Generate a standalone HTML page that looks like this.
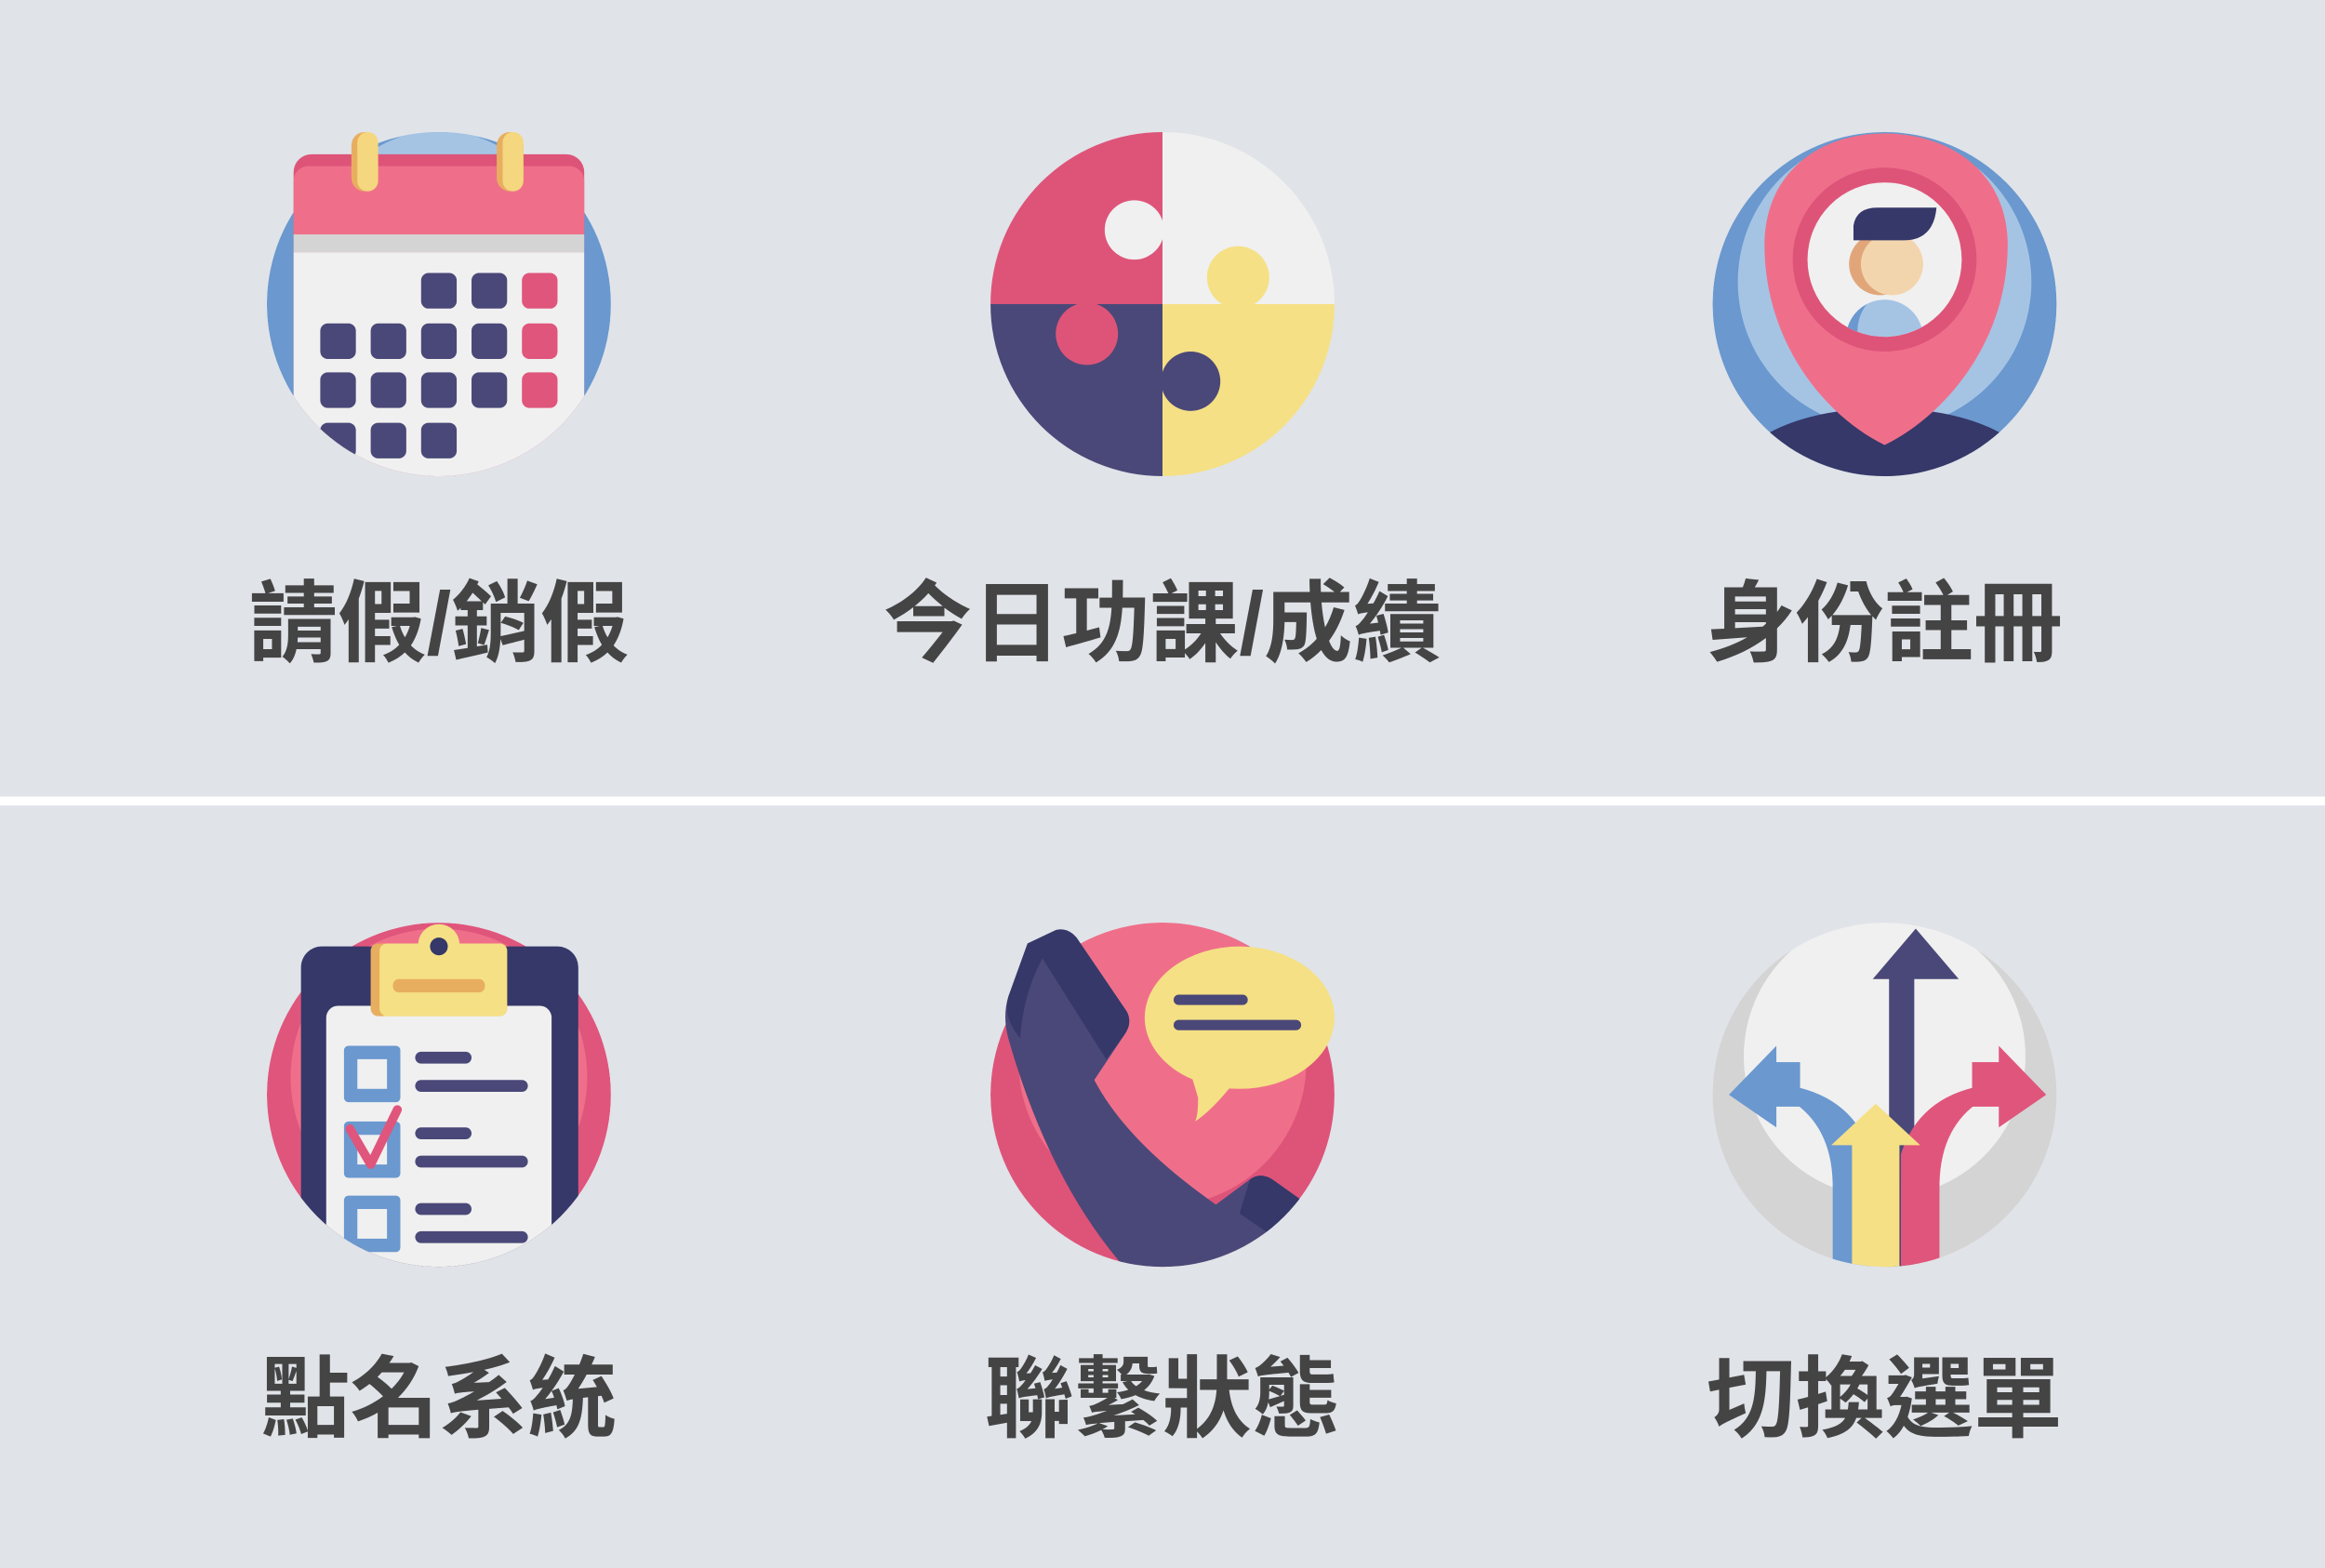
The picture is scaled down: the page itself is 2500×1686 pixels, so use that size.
<!DOCTYPE html>
<html><head><meta charset="utf-8"><style>
html,body{margin:0;padding:0;background:#e0e3e8;}
svg{display:block}
</style></head><body>
<svg width="2500" height="1686" viewBox="0 0 1568 1057" preserveAspectRatio="none" xmlns="http://www.w3.org/2000/svg">
<defs>
<clipPath id="c1"><circle cx="296" cy="205" r="116"/><rect x="190" y="95" width="212" height="90"/></clipPath>
<clipPath id="c1b"><circle cx="296" cy="205" r="116"/></clipPath>
<clipPath id="c2"><circle cx="784" cy="205" r="116"/></clipPath>
<clipPath id="c3"><circle cx="1271" cy="205" r="116"/></clipPath>
<clipPath id="c4"><circle cx="296" cy="738" r="116"/><rect x="195" y="625" width="202" height="110"/></clipPath>
<clipPath id="c4b"><circle cx="296" cy="738" r="116"/></clipPath>
<clipPath id="c5"><circle cx="784" cy="738" r="116"/><rect x="670" y="615" width="95" height="90"/></clipPath>
<clipPath id="c5b"><circle cx="784" cy="738" r="116"/></clipPath>
<clipPath id="c6"><circle cx="1271" cy="738" r="116"/></clipPath>
</defs>
<rect width="1568" height="1057" fill="#e0e3e8"/>
<rect x="0" y="537" width="1568" height="6" fill="#ffffff"/>

<!-- Calendar -->
<g clip-path="url(#c1b)">
<circle cx="296" cy="205" r="116" fill="#6a98cf"/>
<circle cx="296" cy="170" r="82" fill="#a5c4e4"/>
</g>
<g clip-path="url(#c1)">
<rect x="198" y="104" width="196" height="240" rx="12" fill="#de5479"/>
<rect x="198" y="112" width="196" height="48" rx="10" fill="#ef6f8a"/>
<rect x="198" y="150" width="196" height="10" fill="#ef6f8a"/>
<rect x="198" y="158" width="196" height="12" fill="#d4d4d4"/>
<rect x="198" y="170" width="196" height="180" fill="#f0f0f0"/>
<g fill="#4a4878">
<rect x="284" y="184" width="24" height="24" rx="5"/><rect x="318" y="184" width="24" height="24" rx="5"/>
<rect x="216" y="218" width="24" height="24" rx="5"/><rect x="250" y="218" width="24" height="24" rx="5"/><rect x="284" y="218" width="24" height="24" rx="5"/><rect x="318" y="218" width="24" height="24" rx="5"/>
<rect x="216" y="251" width="24" height="24" rx="5"/><rect x="250" y="251" width="24" height="24" rx="5"/><rect x="284" y="251" width="24" height="24" rx="5"/><rect x="318" y="251" width="24" height="24" rx="5"/>
<rect x="216" y="285" width="24" height="24" rx="5"/><rect x="250" y="285" width="24" height="24" rx="5"/><rect x="284" y="285" width="24" height="24" rx="5"/>
</g>
<g fill="#e0557c">
<rect x="352" y="184" width="24" height="24" rx="5"/><rect x="352" y="218" width="24" height="24" rx="5"/><rect x="352" y="251" width="24" height="24" rx="5"/>
</g>
</g>
<g>
<rect x="237" y="89" width="18" height="40" rx="9" fill="#e8ae60"/>
<rect x="241" y="89" width="14" height="40" rx="7" fill="#f5d77f"/>
<rect x="335" y="89" width="18" height="40" rx="9" fill="#e8ae60"/>
<rect x="339" y="89" width="14" height="40" rx="7" fill="#f5d77f"/>
</g>

<!-- Puzzle -->
<g clip-path="url(#c2)">
<rect x="668" y="89" width="116" height="116" fill="#de5479"/>
<rect x="784" y="89" width="116" height="116" fill="#f0f0f0"/>
<rect x="668" y="205" width="116" height="116" fill="#4a4878"/>
<rect x="784" y="205" width="116" height="116" fill="#f5e085"/>
<circle cx="765" cy="155" r="20" fill="#f0f0f0"/>
<circle cx="835" cy="187" r="21" fill="#f5e085"/>
<circle cx="733" cy="225" r="21" fill="#de5479"/>
<circle cx="803" cy="257" r="20" fill="#4a4878"/>
</g>

<!-- Location -->
<g clip-path="url(#c3)">
<circle cx="1271" cy="205" r="116" fill="#6a98cf"/>
<circle cx="1271" cy="190" r="99" fill="#a5c4e4"/>
<ellipse cx="1271" cy="320" rx="100" ry="45" fill="#353868"/>
</g>
<path d="M1271 300 C1230 280 1190 230 1190 165 C1190 118 1225 90 1271 90 C1317 90 1354 118 1354 165 C1354 230 1312 280 1271 300 Z" fill="#ef6f8a"/>
<circle cx="1271" cy="175" r="62" fill="#de5479"/>
<circle cx="1271" cy="175" r="52" fill="#f0f0f0"/>
<clipPath id="pin"><circle cx="1271" cy="175" r="52"/></clipPath>
<g clip-path="url(#pin)">
<circle cx="1271" cy="228" r="26" fill="#a5c4e4"/>
<path d="M1245 228 a26 26 0 0 1 14 -23 a30 30 0 0 0 -6 23 z" fill="#6a98cf"/>
<circle cx="1268" cy="178" r="21" fill="#e0a67a"/>
<circle cx="1276" cy="178" r="21" fill="#f3d5ad"/>
<path d="M1250 162 L1250 152 Q1252 140 1266 140 L1306 140 Q1304 162 1284 162 Z" fill="#353868"/>
</g>

<!-- Clipboard -->
<g clip-path="url(#c4b)">
<circle cx="296" cy="738" r="116" fill="#e0557c"/>
<circle cx="296" cy="726" r="100" fill="#ef6f8a"/>
</g>
<g clip-path="url(#c4)">
<rect x="203" y="638" width="187" height="260" rx="14" fill="#353868"/>
<rect x="220" y="678" width="152" height="230" rx="8" fill="#f0f0f0"/>
<g fill="#6a98cf">
<rect x="232" y="705" width="38" height="38" rx="3"/>
<rect x="232" y="756" width="38" height="38" rx="3"/>
<rect x="232" y="806" width="38" height="38" rx="3"/>
</g>
<g fill="#f0f0f0">
<rect x="241" y="714" width="20" height="20"/>
<rect x="241" y="765" width="20" height="20"/>
<rect x="241" y="815" width="20" height="20"/>
</g>
<g stroke="#4a4878" stroke-width="8" stroke-linecap="round">
<line x1="284" y1="713" x2="314" y2="713"/><line x1="284" y1="732" x2="352" y2="732"/>
<line x1="284" y1="764" x2="314" y2="764"/><line x1="284" y1="783" x2="352" y2="783"/>
<line x1="284" y1="815" x2="314" y2="815"/><line x1="284" y1="834" x2="352" y2="834"/>
</g>
<path d="M236 761 L250 785 L268 748" fill="none" stroke="#e0557c" stroke-width="6" stroke-linecap="round" stroke-linejoin="round"/>
</g>
<circle cx="296" cy="637" r="14" fill="#f5e085"/>
<rect x="250" y="636" width="92" height="49" rx="5" fill="#e8ae60"/>
<rect x="256" y="636" width="86" height="49" rx="5" fill="#f5e085"/>
<circle cx="296" cy="638" r="6" fill="#353868"/>
<rect x="265" y="660" width="62" height="9" rx="4" fill="#e8ae60"/>

<!-- Phone -->
<g clip-path="url(#c5b)">
<circle cx="784" cy="738" r="116" fill="#de5479"/>
<circle cx="784" cy="716" r="97" fill="#ef6f8a"/>
</g>
<g clip-path="url(#c5)">
<path d="M693 636 L712 627 Q720 625 726 632 L760 682 Q764 690 758 698 L738 728 Q760 770 820 812 L843 795 Q850 790 858 795 L890 818 L860 900 L810 900 Q720 840 680 700 Q676 685 680 672 Z" fill="#4a4878"/>
<path d="M693 636 L712 627 Q720 625 726 632 L760 682 Q764 690 758 698 L746 714 L703 646 Q690 670 688 700 Q676 685 680 672 Z" fill="#353868"/>
<path d="M843 795 Q850 790 858 795 L882 812 L868 840 L836 818 Z" fill="#353868"/>
</g>
<ellipse cx="836" cy="686" rx="64" ry="48" fill="#f5e085"/>
<path d="M802 720 L808 740 Q808 752 806 756 Q818 748 832 730 Z" fill="#f5e085"/>
<g stroke="#4a4878" stroke-width="7" stroke-linecap="round">
<line x1="795" y1="674" x2="838" y2="674"/>
<line x1="795" y1="691" x2="874" y2="691"/>
</g>

<!-- Arrows -->
<g clip-path="url(#c6)">
<circle cx="1271" cy="738" r="116" fill="#d4d4d4"/>
<circle cx="1271" cy="712" r="95" fill="#f0f0f0"/>
<rect x="1274" y="650" width="17" height="220" fill="#4a4878"/>
<path d="M1263 660 L1292 626 L1321 660 Z" fill="#4a4878"/>
<path d="M1236 870 L1236 800 Q1236 760 1208 742 L1208 732 Q1250 740 1262 778 L1262 870 Z" fill="#6a98cf"/>
<path d="M1166 738 L1198 705 L1198 760 Z" fill="#6a98cf"/>
<rect x="1190" y="716" width="24" height="30" fill="#6a98cf"/>
<path d="M1308 870 L1308 800 Q1308 760 1336 742 L1336 732 Q1294 740 1282 778 L1282 870 Z" fill="#e0557c"/>
<path d="M1380 738 L1348 705 L1348 760 Z" fill="#e0557c"/>
<rect x="1330" y="716" width="24" height="30" fill="#e0557c"/>
<rect x="1249" y="770" width="32" height="100" fill="#f5e085"/>
<path d="M1235 772 L1265 744 L1295 772 Z" fill="#f5e085"/>
</g>

<g font-family="'Liberation Sans','Noto Sans CJK TC','Noto Sans CJK SC',sans-serif" font-weight="bold" font-size="60" fill="#444444" text-anchor="middle">
<text x="296" y="441">請假/銷假</text>
<text x="784" y="441">今日功課/成績</text>
<text x="1271" y="441">身份註冊</text>
<text x="296" y="964">點名系統</text>
<text x="784" y="964">聯繫狀態</text>
<text x="1271" y="964">切換選單</text>
</g>
</svg>
</body></html>
